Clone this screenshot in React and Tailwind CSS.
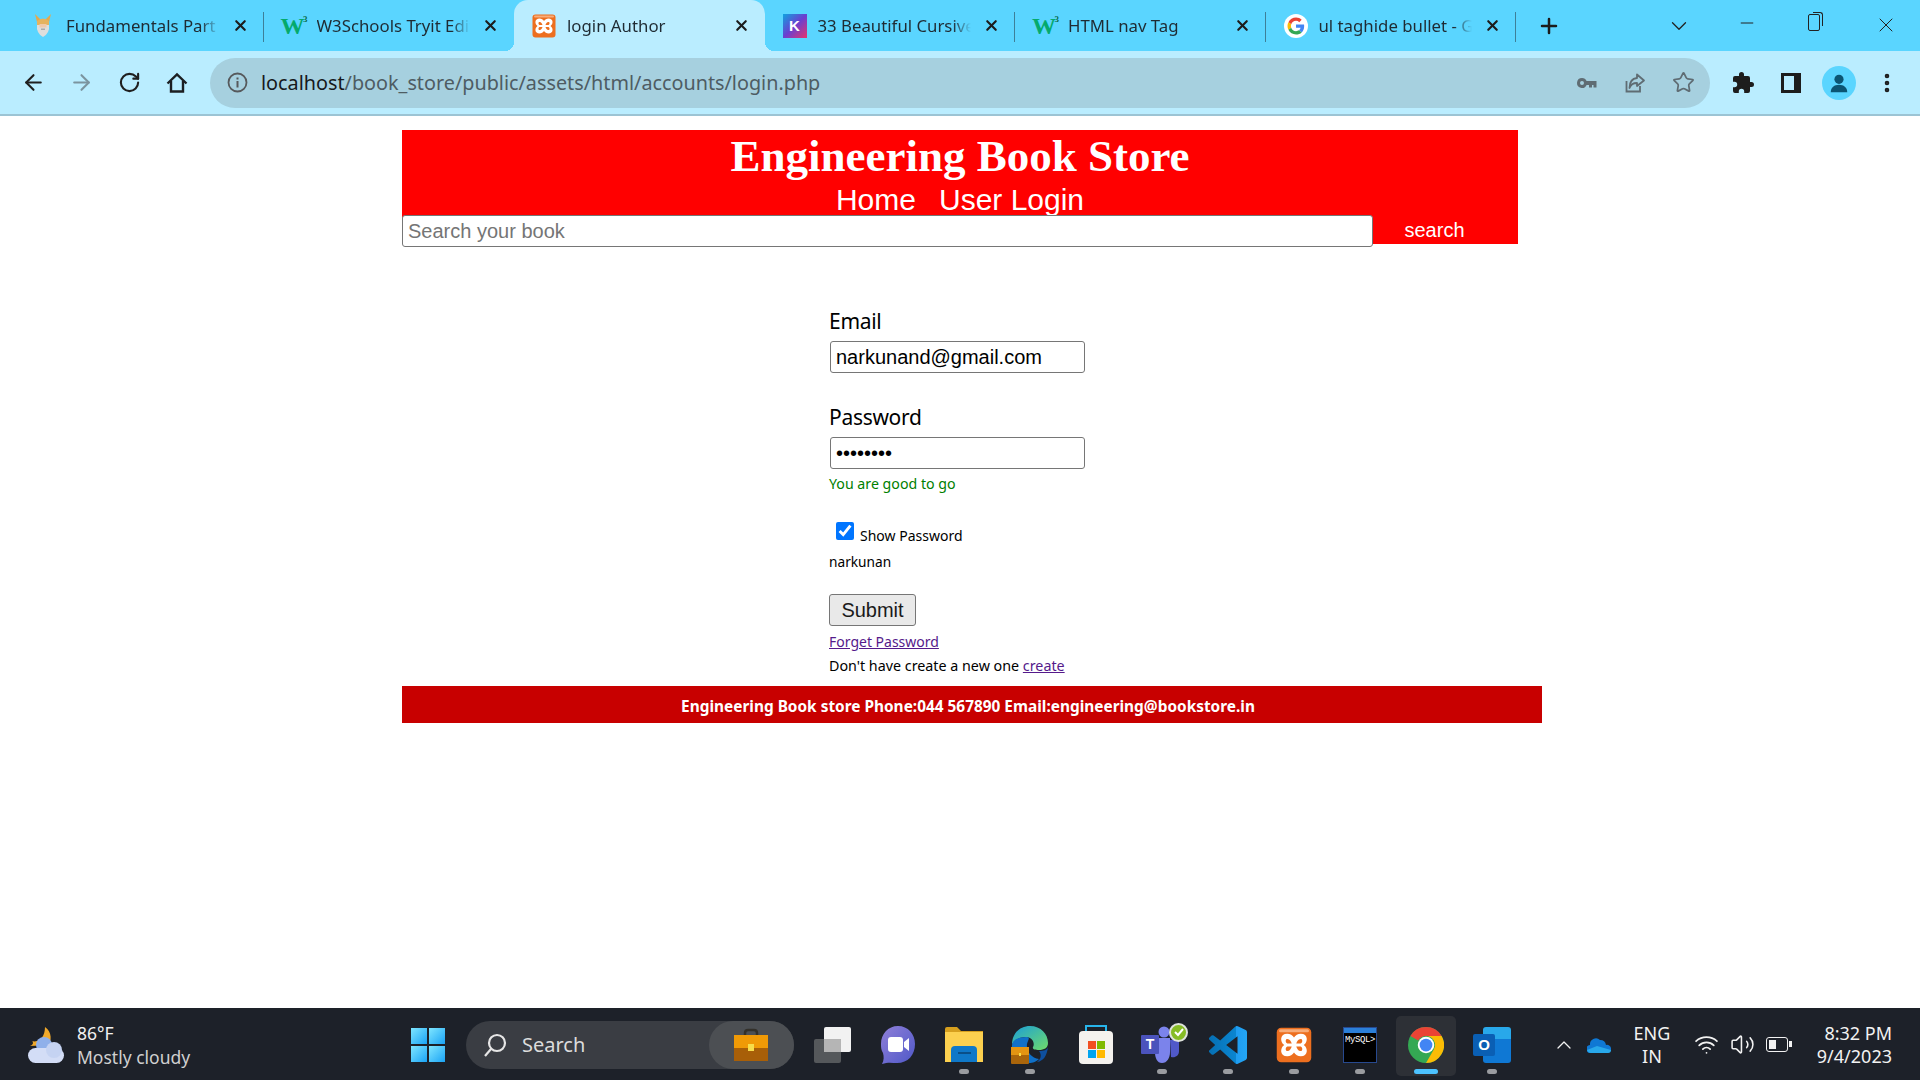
import React from "react";
import { ArrowLeft, ArrowRight, RotateCw, X, Plus, ChevronDown, Minus, EllipsisVertical, ChevronUp, Wifi, Volume2, Star } from "lucide-react";

const UI = "font-['Noto_Sans','Open_Sans',sans-serif]";

function Dwarf() {
  return (
    <svg width="20" height="24" viewBox="0 0 20 24">
      <path d="M2 0 L4 8 L8 6 Z" fill="#e2a94f" />
      <path d="M18 0 L16 8 L12 6 Z" fill="#e2a94f" />
      <path d="M4 7 Q10 2 16 7 L16 11 L4 11 Z" fill="#e5b35f" />
      <path d="M4 11 H16 Q17 19 10 23 Q3 19 4 11 Z" fill="#dededc" />
      <rect x="6.500" y="10" width="7" height="3.500" fill="#f0c9ab" />
      <rect x="8" y="14.500" width="4" height="1.500" fill="#aaa" />
    </svg>
  );
}
function W3() {
  return (
    <span className="relative flex w-[26px] h-[22px] items-center font-['Liberation_Serif',serif] font-bold text-[#04aa6d] text-[24px] leading-none">
      W<span className="absolute right-[-1px] top-[0px] text-[9px] text-[#0b6b4a]">3</span>
    </span>
  );
}
function Xampp({ size = 24 }) {
  return (
    <svg width={size} height={size} viewBox="0 0 24 24">
      <rect x="0.500" y="0.500" width="23" height="23" rx="3" fill="#ed6f1f" />
      <rect x="2" y="1.500" width="20" height="2" rx="1" fill="#f8ad7a" />
      <path d="M7.500 4.500 C2.500 4.500 2.500 10 5.500 12 C2.500 14 2.500 19.500 7.500 19.500 C9.500 19.500 11 18.500 12 17 C13 18.500 14.500 19.500 16.500 19.500 C21.500 19.500 21.500 14 18.500 12 C21.500 10 21.500 4.500 16.500 4.500 C14.500 4.500 13 5.500 12 7 C11 5.500 9.500 4.500 7.500 4.500 Z" fill="#fff" />
      <path d="M7 8 C9 7.500 10 9.500 10.500 11 H7.500 C6.500 10.500 6 9 7 8 Z M17 8 C15 7.500 14 9.500 13.500 11 H16.500 C17.500 10.500 18 9 17 8 Z M7 16 C9 16.500 10 14.500 10.500 13 H7.500 C6.500 13.500 6 15 7 16 Z M17 16 C15 16.500 14 14.500 13.500 13 H16.500 C17.500 13.500 18 15 17 16 Z" fill="#ed6f1f" />
    </svg>
  );
}
function Google() {
  return (
    <svg width="24" height="24" viewBox="0 0 48 48">
      <circle cx="24" cy="24" r="24" fill="#fff" />
      <g transform="translate(7 7) scale(.71)">
        <path fill="#EA4335" d="M24 9.500c3.500 0 6.600 1.200 9.100 3.600l6.800-6.800C35.800 2.400 30.300 0 24 0 14.600 0 6.500 5.400 2.600 13.200l7.900 6.100C12.400 13.600 17.700 9.500 24 9.500z" />
        <path fill="#4285F4" d="M46.900 24.500c0-1.600-.1-3.100-.4-4.500H24v9h12.900c-.6 3-2.200 5.500-4.700 7.200l7.700 6c4.500-4.100 7-10.300 7-17.700z" />
        <path fill="#FBBC05" d="M10.500 28.700c-.5-1.400-.8-3-.8-4.700s.3-3.300.8-4.700l-7.900-6.100C.9 16.500 0 20.100 0 24s.9 7.500 2.600 10.800l7.900-6.100z" />
        <path fill="#34A853" d="M24 48c6.500 0 11.900-2.100 15.900-5.800l-7.700-6c-2.100 1.400-4.900 2.300-8.200 2.300-6.300 0-11.600-4.100-13.500-9.800l-7.900 6.100C6.500 42.600 14.600 48 24 48z" />
      </g>
    </svg>
  );
}
function KLogo() {
  return (
    <span className="flex w-6 h-6 items-center justify-center bg-[linear-gradient(135deg,#0fa3e0_0%,#6a3fd0_50%,#e8336d_100%)] text-white text-[15px] font-bold font-['Liberation_Sans',sans-serif] leading-none">K</span>
  );
}

const tabs = [
  { t: "Fundamentals Part 1", i: <Dwarf />, sep: true },
  { t: "W3Schools Tryit Editor", i: <W3 /> },
  { t: "login Author", i: <Xampp />, active: true },
  { t: "33 Beautiful Cursive Fonts", i: <KLogo />, sep: true },
  { t: "HTML nav Tag", i: <W3 />, sep: true },
  { t: "ul taghide bullet - Google Search", i: <Google />, sep: true },
];

function Tab({ t, i, active, sep }) {
  return (
    <div className={`relative flex items-center w-[250.500px] h-[51px] shrink-0 pl-[17px] pr-[15px] ${active ? "bg-[#baedff] rounded-t-[14px]" : ""}`}>
      {active && <span className="absolute bottom-0 left-[-9px] w-[9px] h-[9px] bg-[radial-gradient(circle_at_0_0,transparent_9px,#baedff_9px)]" />}
      {active && <span className="absolute bottom-0 right-[-9px] w-[9px] h-[9px] bg-[radial-gradient(circle_at_100%_0,transparent_9px,#baedff_9px)]" />}
      <span className="flex w-[26px] h-[26px] items-center justify-center shrink-0">{i}</span>
      <span className={`ml-[10px] w-[153px] overflow-hidden whitespace-nowrap text-[16.800px] text-[#1f2b33] [mask-image:linear-gradient(to_right,black_88%,transparent)] ${UI}`}>{t}</span>
      <X className="ml-auto text-[#1c1c1c]" size={17} strokeWidth={3} />
      {sep && <span className="absolute right-0 top-[12px] h-[30px] w-px bg-[#3d7f98]" />}
    </div>
  );
}

function KeyIcon() {
  return (
    <svg width="24" height="24" viewBox="0 0 24 24" fill="#5f6c73">
      <path d="M7 7a5 5 0 1 0 4.600 7H14v2.500h3V14h1.500v2.500H21.500V10H11.600A5 5 0 0 0 7 7zm0 3a2 2 0 1 1 0 4 2 2 0 0 1 0-4z" />
    </svg>
  );
}
function ShareIcon() {
  return (
    <svg width="24" height="24" viewBox="0 0 24 24" fill="none" stroke="#5f6c73" strokeWidth="1.800">
      <path d="M3.500 10V20.500H17V15" />
      <path d="M14 3.500 L21 9.500 L14 15 V12 C10 12 7.500 14 6.500 17 C6.500 11 9.500 7.500 14 7 Z" strokeLinejoin="round" />
    </svg>
  );
}
function HomeIcon() {
  return (
    <svg width="24" height="24" viewBox="0 0 24 24" fill="none" stroke="#1c1f22" strokeWidth="2.400" strokeLinejoin="miter">
      <path d="M2.500 12.500 L12 3.500 L21.500 12.500" />
      <path d="M6 10 V20.500 H18 V10" />
    </svg>
  );
}
function InfoIcon() {
  return (
    <svg width="21" height="21" viewBox="0 0 21 21" className="shrink-0">
      <circle cx="10.500" cy="10.500" r="9" fill="none" stroke="#56595c" strokeWidth="1.800" />
      <rect x="9.500" y="9" width="2" height="6.500" fill="#56595c" />
      <rect x="9.500" y="5.500" width="2" height="2" fill="#56595c" />
    </svg>
  );
}
function PuzzleIcon() {
  return (
    <svg width="24" height="24" viewBox="0 0 24 24" fill="#1d1d1d">
      <path d="M20.500 11H19V7a2 2 0 0 0-2-2h-4V3.500a2.500 2.500 0 0 0-5 0V5H4a2 2 0 0 0-2 2v3.800h1.500a2.700 2.700 0 0 1 0 5.400H2V20a2 2 0 0 0 2 2h3.800v-1.500a2.700 2.700 0 0 1 5.400 0V22H17a2 2 0 0 0 2-2v-4h1.500a2.500 2.500 0 0 0 0-5z" />
    </svg>
  );
}
function Avatar() {
  return (
    <span className="flex w-[34px] h-[34px] rounded-full bg-[#5ad5ff] items-center justify-center">
      <svg width="22" height="22" viewBox="0 0 24 24" fill="#0b5573">
        <circle cx="12" cy="8" r="5" />
        <path d="M3 22c0-5 4-8 9-8s9 3 9 8z" />
      </svg>
    </span>
  );
}
function Btn({ children }) {
  return <div className="flex w-[48px] h-[48px] items-center justify-center shrink-0">{children}</div>;
}

function WindowsLogo() {
  const c = "w-[16px] h-[16px] bg-[linear-gradient(135deg,#7fe6ff,#1aa3f5)]";
  return (
    <div className="grid grid-cols-2 gap-[2px] w-[34px]">
      <span className={c} /><span className={c} /><span className={c} /><span className={c} />
    </div>
  );
}
function Briefcase({ size = 36 }) {
  return (
    <svg width={size} height={size} viewBox="0 0 36 36">
      <path d="M12 9 V6 Q12 3 15 3 H21 Q24 3 24 6 V9" fill="none" stroke="#33302a" strokeWidth="2.500" />
      <rect x="1" y="8" width="34" height="13" fill="#f09a06" />
      <rect x="1" y="21" width="34" height="13" fill="#a85f08" />
      <rect x="15" y="17" width="6" height="7" fill="#f7dd4a" />
    </svg>
  );
}
function Weather() {
  return (
    <svg width="38" height="38" viewBox="0 0 38 38">
      <path d="M17 1 C24 6 24 15 20 19 L2 20 C8 18 3 14 4 15 C11 17 17 11 17 1 Z" fill="#f0a92b" />
      <circle cx="16" cy="19" r="8" fill="#8fb0ea" />
      <rect x="0" y="22" width="36" height="15" rx="7.500" fill="#d3ddf6" />
      <circle cx="26" cy="24" r="8" fill="#c5d3f2" />
    </svg>
  );
}
function TaskView() {
  return (
    <svg width="38" height="38" viewBox="0 0 38 38">
      <rect x="1" y="13" width="27" height="24" rx="2" fill="#55585b" />
      <rect x="11" y="1" width="27" height="25" rx="2" fill="#f2f2f2" />
      <rect x="11" y="13" width="17" height="13" fill="#b5b5b5" />
    </svg>
  );
}
function Chat() {
  return (
    <svg width="36" height="40" viewBox="0 0 36 40">
      <defs><linearGradient id="ch" x1="0" y1="0" x2="1" y2="1"><stop offset="0" stopColor="#8f7fd8" /><stop offset="1" stopColor="#4f58c8" /></linearGradient></defs>
      <path d="M18 1 C28 1 35 9 35 19 C35 30 28 38 17 38 C12 38 8 37 2 39 C4 35 4 32 3 28 C1 25 1 22 1 19 C1 9 8 1 18 1 Z" fill="url(#ch)" />
      <rect x="8" y="12" width="15" height="15" rx="3" fill="#fff" />
      <path d="M24 17 L29 13 V26 L24 22 Z" fill="#fff" />
    </svg>
  );
}
function Folder() {
  return (
    <svg width="38" height="36" viewBox="0 0 38 36">
      <path d="M0 2 Q0 0 2 0 H12 L16 4 H38 V35 H0 Z" fill="#d69f1e" />
      <rect x="0" y="5" width="38" height="30" fill="#fcd04f" />
      <path d="M6 35 V23 Q6 19 10 19 H28 Q32 19 32 23 V35 Z" fill="#0f78c8" />
      <rect x="13" y="25" width="13" height="2" fill="#0a4f88" />
    </svg>
  );
}
function Edge() {
  return (
    <svg width="38" height="38" viewBox="0 0 38 38">
      <defs><linearGradient id="ed" x1="0" y1="0" x2="1" y2="1"><stop offset="0" stopColor="#1a9ed8" /><stop offset="1" stopColor="#6fdc6a" /></linearGradient></defs>
      <path d="M1 19 C1 7 9 0 19 0 C30 0 37 8 37 17 C37 22 33 24 28 24 C24 24 21 23 22 21 C24 18 22 11 15 11 C8 11 2 15 1 19 Z" fill="url(#ed)" />
      <path d="M1 19 C2 13 9 11 15 11 C20 11 17 14 16 18 C15 25 20 32 28 33 C24 37 20 37 17 37 C8 37 0 29 1 19 Z" fill="#0f70c8" />
      <path d="M28 25 C33 25 36 24 37 21 C36 29 33 35 26 36 C30 33 31 29 28 25 Z" fill="#0e4f9e" />
      <rect x="0" y="21" width="18" height="17" rx="1" fill="#a9650b" />
      <rect x="0" y="21" width="18" height="8" fill="#e39512" />
      <rect x="8" y="27" width="2" height="3" fill="#f7dd4a" />
    </svg>
  );
}
function Store() {
  return (
    <svg width="36" height="40" viewBox="0 0 36 40">
      <path d="M8 8 V1 H28 V8" fill="none" stroke="#27b4ea" strokeWidth="2" />
      <rect x="1" y="6" width="34" height="33" rx="4" fill="#f4f2ee" />
      <rect x="10" y="16" width="8" height="8" fill="#f25022" />
      <rect x="19" y="16" width="8" height="8" fill="#7fba00" />
      <rect x="10" y="25" width="8" height="8" fill="#00a4ef" />
      <rect x="19" y="25" width="8" height="8" fill="#ffb900" />
    </svg>
  );
}
function Teams() {
  return (
    <span className="relative flex w-[42px] h-[38px]">
      <svg width="36" height="38" viewBox="0 0 36 38" className="ml-[6px]">
        <circle cx="17" cy="6" r="5.500" fill="#7b83eb" />
        <path d="M8 12 H23 V26 C23 32 20 37 15 37 C10 37 8 32 8 26 Z" fill="#7b83eb" />
        <circle cx="26" cy="9" r="3.500" fill="#5059c9" />
        <path d="M23 14 H32 V25 C32 30 28 32 24 31 Z" fill="#5059c9" />
      </svg>
      <span className="absolute left-0 top-[9px] flex w-[18px] h-[19px] rounded-[1px] items-center justify-center bg-[#4b53bc] text-white text-[14px] font-bold font-['Liberation_Sans',sans-serif] leading-none">T</span>
      <span className="absolute right-[-5px] top-[-3px] flex w-[15px] h-[15px] box-content rounded-full bg-[#86bc25] border-[2px] border-[#dfe3dc] items-center justify-center">
        <svg width="10" height="10" viewBox="0 0 10 10"><path d="M1 5 L4 8 L9 2" stroke="#fff" strokeWidth="2" fill="none" /></svg>
      </span>
    </span>
  );
}
function VSCode() {
  return (
    <svg width="38" height="38" viewBox="0 0 24 24">
      <defs><linearGradient id="vs" x1="0" y1="0" x2="1" y2="0"><stop offset="0" stopColor="#0670b4" /><stop offset="0.700" stopColor="#0a85d0" /><stop offset="0.720" stopColor="#1f9cf0" /><stop offset="1" stopColor="#23a6f5" /></linearGradient></defs>
      <path fill="url(#vs)" d="M23.150 2.587L18.210.21a1.494 1.494 0 0 0-1.705.29l-9.460 8.630-4.120-3.128a.999.999 0 0 0-1.276.057L.327 7.261A1 1 0 0 0 .326 8.740L3.899 12 .326 15.260a1 1 0 0 0 .001 1.479L1.650 17.940a.999.999 0 0 0 1.276.057l4.120-3.128 9.460 8.630a1.492 1.492 0 0 0 1.704.29l4.942-2.377A1.500 1.500 0 0 0 24 20.060V3.939a1.500 1.500 0 0 0-.850-1.352zm-5.146 14.861L10.826 12l7.178-5.448v10.896z" />
    </svg>
  );
}
function Mysql() {
  return (
    <span className="flex flex-col w-[34px] h-[36px] border border-[#27498f] bg-black">
      <span className="h-[5px] bg-[#2b7fd8] shrink-0" />
      <span className="flex-1 pt-[3px] pl-[1px] text-[9px] leading-none text-white font-['Liberation_Mono',monospace] overflow-hidden whitespace-nowrap tracking-[-0.4px]">MySQL&gt;</span>
    </span>
  );
}
function Chrome() {
  return (
    <svg width="36" height="36" viewBox="0 0 48 48">
      <circle cx="24" cy="24" r="24" fill="#34a853" />
      <path d="M24 0 A24 24 0 0 1 44.800 12 H24 A12 12 0 0 0 13.600 18 L3.200 12 A24 24 0 0 1 24 0 Z" fill="#ea4335" />
      <path d="M44.800 12 A24 24 0 0 1 24 48 L34.400 30 A12 12 0 0 0 24 12 Z" fill="#fbbc05" />
      <circle cx="24" cy="24" r="11" fill="#fff" />
      <circle cx="24" cy="24" r="8.500" fill="#4285f4" />
    </svg>
  );
}
function Outlook() {
  return (
    <span className="relative flex w-[38px] h-[36px] items-center">
      <span className="absolute right-0 top-0 w-[28px] h-[36px] rounded-[3px] bg-[linear-gradient(180deg,#28a8ea_0%,#28a8ea_33%,#0f78d4_33%,#0f78d4_100%)]" />
      <span className="relative flex w-[22px] h-[22px] rounded-[2px] bg-[#0a5fb4] text-white text-[15px] font-bold items-center justify-center font-['Liberation_Sans',sans-serif] leading-none">O</span>
    </span>
  );
}

const taskIcons = [
  { i: <TaskView /> },
  { i: <Chat /> },
  { i: <Folder />, dot: true },
  { i: <Edge />, dot: true },
  { i: <Store /> },
  { i: <Teams />, dot: true },
  { i: <VSCode />, dot: true },
  { i: <Xampp size={36} />, dot: true },
  { i: <Mysql />, dot: true },
  { i: <Chrome />, active: true },
  { i: <Outlook />, dot: true },
];

function TaskIcon({ i, dot, active }) {
  return (
    <div className="relative flex w-[66px] h-[72px] items-center justify-center shrink-0">
      {active && <span className="absolute left-[3px] top-[7px] w-[60px] h-[60px] rounded-[5px] bg-[#2d3036]" />}
      <span className="relative flex">{i}</span>
      {dot && <span className="absolute bottom-[7px] left-[28px] w-[10px] h-[5px] rounded-full bg-[#9a9ca0]" />}
      {active && <span className="absolute bottom-[7px] left-[21px] w-[24px] h-[5px] rounded-full bg-[#4cc2ff]" />}
    </div>
  );
}

export default function App() {
  return (
    <div className="flex flex-col w-full h-screen overflow-hidden bg-white">
      <div className="flex h-[51px] shrink-0 items-center bg-[#5ad5ff] pl-[13px]">
        {tabs.map((t) => <Tab key={t.t} {...t} />)}
        <Plus className="ml-[21px] text-[#1c1c1c] shrink-0" size={24} strokeWidth={2.500} />
        <div className="ml-auto flex w-[275px] shrink-0">
          <div className="flex flex-1 justify-center"><ChevronDown size={26} strokeWidth={1.200} className="text-[#222]" /></div>
          <div className="flex flex-1 justify-center"><Minus size={20} strokeWidth={1.200} className="text-[#222]" /></div>
          <div className="flex flex-1 justify-center pr-[4px]">
            <span className="relative block w-[12px] h-[17px] mt-[1px] rounded-[2px] border border-[#222]">
              <span className="absolute right-[-4px] top-[-3px] w-[10px] h-[14px] rounded-tr-[3px] border-t border-r border-[#222]" />
            </span>
          </div>
          <div className="flex flex-1 justify-center"><X size={24} strokeWidth={1} className="text-[#222]" /></div>
        </div>
      </div>

      <div className="flex h-[65px] shrink-0 items-center bg-[#baedff] border-b-2 border-[#9cc4d4] pl-[9px]">
        <Btn><ArrowLeft size={25} strokeWidth={2} className="text-[#1f1f1f]" /></Btn>
        <Btn><ArrowRight size={25} strokeWidth={2} className="text-[#7b949f]" /></Btn>
        <Btn><RotateCw size={23} strokeWidth={2.200} className="text-[#1f1f1f]" /></Btn>
        <Btn><HomeIcon /></Btn>
        <div className="ml-[9px] flex items-center w-[1500px] h-[50px] rounded-full bg-[#a6d0df] pl-[17px] pr-[3px]">
          <InfoIcon />
          <span className={`ml-[13px] text-[19.800px] text-[#4e5c63] whitespace-nowrap ${UI}`}>
            <span className="text-[#16191b]">localhost</span>/book_store/public/assets/html/accounts/login.php
          </span>
          <div className="ml-auto flex">
            <Btn><KeyIcon /></Btn>
            <Btn><ShareIcon /></Btn>
            <Btn><Star size={23} strokeWidth={1.800} className="text-[#5f6c73]" /></Btn>
          </div>
        </div>
        <div className="ml-[9px] flex">
          <Btn><PuzzleIcon /></Btn>
          <Btn><span className="block w-[20px] h-[20px] border-[3px] border-r-[7px] border-[#1d1d1d]" /></Btn>
          <Btn><Avatar /></Btn>
          <Btn><EllipsisVertical size={24} strokeWidth={2.600} className="text-[#1d1d1d]" /></Btn>
        </div>
      </div>

      <main className="flex-1 min-h-0 pt-[14px] pl-[402px]">
        <header className="w-[1116px] h-[114px] bg-[#ff0000] text-white font-['Liberation_Sans',sans-serif]">
          <h1 className="h-[54px] text-center text-[45px] leading-[52px] font-bold font-['Liberation_Serif',serif]">Engineering Book Store</h1>
          <nav className="flex h-[31px] justify-center gap-[23px] text-[30px] leading-[31px]">
            <a>Home</a>
            <a>User Login</a>
          </nav>
          <div className="flex items-start">
            <input readOnly placeholder="Search your book" className="w-[971px] h-[32px] px-[5px] bg-white border border-[#767676] rounded-[3px] text-[20px] placeholder:text-[#757575] outline-none" />
            <button className="w-[123px] h-[30px] text-[20px] text-white text-center">search</button>
          </div>
        </header>

        <form className="ml-[428px] w-[300px] pt-[61px] font-['Noto_Sans',sans-serif] text-black">
          <label className="block h-[36px] ml-[-1px] text-[21px] leading-[33px] tracking-[-0.300px]">Email</label>
          <input readOnly value="narkunand@gmail.com" className="block w-[255px] h-[32px] px-[5px] border border-[#767676] rounded-[3px] text-[20px] font-['Liberation_Sans',sans-serif] outline-none" />
          <label className="block h-[38px] ml-[-1px] mt-[26px] text-[21px] leading-[36px] tracking-[-0.300px]">Password</label>
          <input readOnly type="password" value="narkunan" className="block w-[255px] h-[32px] px-[5px] border border-[#767676] rounded-[3px] text-[20px] font-['Liberation_Sans',sans-serif] outline-none" />
          <p className="mt-[5px] ml-[-1px] h-[20px] text-[14.200px] leading-[20px] text-[#008000]">You are good to go</p>
          <div className="flex items-center mt-[29px] h-[24px] pl-[6px] text-[14px] leading-[20px]">
            <input type="checkbox" readOnly checked className="w-[18px] h-[18px] accent-[#0075ff] mb-[8px]" />
            <span className="ml-[6px] mt-[1px]">Show Password</span>
          </div>
          <p className="mt-[5px] ml-[-1px] h-[20px] text-[13.700px] leading-[20px]">narkunan</p>
          <button type="button" className="block mt-[22px] ml-[-1px] w-[87px] h-[32px] bg-[#e9e9e9] border border-[#767676] rounded-[3px] text-[20px] leading-none text-[#1a1a1a] font-['Liberation_Sans',sans-serif]">Submit</button>
          <a className="block mt-[6px] ml-[-1px] h-[20px] text-[14px] leading-[20px] text-[#551a8b] underline">Forget Password</a>
          <p className="mt-[4px] ml-[-1px] h-[20px] text-[14.300px] leading-[20px] whitespace-nowrap">Don't have create a new one <a className="text-[#551a8b] underline">create</a></p>
        </form>

        <footer className="flex w-[1140px] h-[37px] mt-[10px] items-center justify-center pr-[8px] pt-[4px] bg-[#c80000] text-white text-[15.400px] font-bold font-['Noto_Sans',sans-serif] whitespace-nowrap">
          Engineering Book store Phone:044 567890 Email:engineering@bookstore.in
        </footer>
      </main>

      <div className={`flex h-[72px] shrink-0 items-center pt-[1px] bg-[#1d2129] text-[#f2f2f2] ${UI}`}>
        <div className="flex items-center w-[395px] pl-[28px] shrink-0">
          <Weather />
          <div className="ml-[11px] flex flex-col text-[17.500px] leading-[24px]">
            <span>86°F</span>
            <span className="text-[#d0d0d0]">Mostly cloudy</span>
          </div>
        </div>
        <div className="flex w-[66px] justify-center shrink-0"><WindowsLogo /></div>
        <div className="ml-[5px] flex items-center w-[328px] h-[48px] rounded-full bg-[#3a3d43] shrink-0 pl-[17px]">
          <svg width="24" height="26" viewBox="0 0 24 26" fill="none" stroke="#e6e6e6" strokeWidth="2.200">
            <circle cx="14" cy="11" r="8" />
            <path d="M8 17 L2 24" />
          </svg>
          <span className="ml-[15px] text-[20px] text-[#dcdcdc]">Search</span>
          <span className="ml-auto flex w-[85px] h-[48px] rounded-full bg-[#4c4f53] items-center justify-center pr-[2px]">
            <Briefcase />
          </span>
        </div>
        <div className="ml-[5px] flex shrink-0">
          {taskIcons.map((t, n) => <TaskIcon key={n} {...t} />)}
        </div>
        <div className="flex items-center flex-1 min-w-0 pl-[27px] pr-[28px]">
          <ChevronUp size={24} strokeWidth={1.300} className="shrink-0" />
          <svg className="ml-[11px] shrink-0" width="24" height="16" viewBox="0 0 24 16">
            <path d="M4 16 A4 4 0 0 1 3 8 A6 6 0 0 1 13 3 A6 6 0 0 1 19 8 A4 4 0 0 1 21 16 Z" fill="#0f78d4" />
            <path d="M0 13 L10 9 L24 13 Q24 16 21 16 H4 Q1 16 0 13 Z" fill="#28a8ea" />
          </svg>
          <div className="ml-[21px] w-[40px] text-center text-[18px] leading-[23px]">ENG<br />IN</div>
          <Wifi className="ml-[22px] shrink-0" size={25} strokeWidth={1.700} />
          <Volume2 className="ml-[11px] shrink-0" size={25} strokeWidth={1.500} />
          <span className="relative ml-[11px] flex w-[22px] h-[15px] rounded-[3px] border-[1.500px] border-[#f2f2f2] p-[2px] shrink-0">
            <span className="block w-[7px] h-full bg-[#f2f2f2]" />
            <span className="absolute right-[-5px] top-[3px] w-[3px] h-[6px] bg-[#f2f2f2]" />
          </span>
          <div className="ml-auto text-right text-[18px] leading-[23px] whitespace-nowrap">8:32 PM<br />9/4/2023</div>
        </div>
      </div>
    </div>
  );
}
